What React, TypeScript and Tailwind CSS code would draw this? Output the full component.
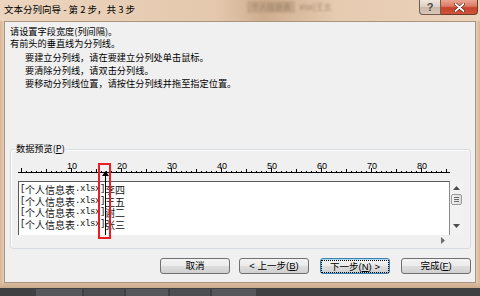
import React from "react"

const ui = { fontFamily: '"Liberation Sans", "Noto Sans CJK SC", sans-serif' }
const cjk = { fontFamily: '"Noto Sans CJK SC", "Liberation Sans", sans-serif' }
const mono = { fontFamily: '"Liberation Mono", monospace' }

const rows = ["李四", "王五", "谢二", "张三"]

function Ruler() {
  const ticks = []
  for (let n = 0; n <= 85; n++) {
    const x = 3 + n * 5
    const h = n % 10 === 0 ? 4 : n % 5 === 0 ? 3 : 1
    ticks.push(<line key={n} x1={x + 0.5} x2={x + 0.5} y1={15 - h} y2={16} stroke="#000" strokeWidth={1} />)
  }
  const nums = [10, 20, 30, 40, 50, 60, 70, 80]
  return (
    <svg width={434} height={22} className="block">
      <line x1={0} x2={432} y1={15.5} y2={15.5} stroke="#000" strokeWidth={1} />
      {ticks}
      {nums.map((n) => (
        <text key={n} x={3 + n * 5 + 1} y={12} fontSize={9} textAnchor="middle" fill="#000" style={ui}>
          {n}
        </text>
      ))}
    </svg>
  )
}

function Btn({ children, focused }: { children: React.ReactNode; focused?: boolean }) {
  return (
    <div
      className={
        "w-[70px] h-[16px] rounded-[3px] border flex items-center justify-center text-[9.5px] text-black bg-[linear-gradient(#f3f3f3_0%,#ebebeb_48%,#dddddd_52%,#d0d0d0_100%)] " +
        (focused ? "border-[#3c7fb1] shadow-[inset_0_0_0_1px_#a9dcf5]" : "border-[#707070]")
      }
      style={ui}
    >
      {focused ? (
        <span className="border border-dotted border-black px-[8px] leading-[11px]">{children}</span>
      ) : (
        children
      )}
    </div>
  )
}

export default function App() {
  return (
    <div className="w-[480px] h-[296px] overflow-hidden flex flex-col bg-[#dcbd9f]" style={ui}>
      {/* title bar */}
      <div className="h-[21px] flex items-start bg-[linear-gradient(90deg,#ecd5bf_0%,#e4c8ad_45%,#cfae8f_55%,#e6cbb1_70%,#ebd2ba_100%)]">
        <div className="pl-[4px] pt-[3px] text-[9.5px] leading-[12px] text-black whitespace-nowrap" style={cjk}>
          文本分列向导 - 第 2 步，共 3 步
        </div>
        <div className="flex-1 flex items-start pl-[112px] pt-[1px] text-[8px] text-[#6e5a48] opacity-60 blur-[1px] whitespace-nowrap" style={cjk}>
          <span className="bg-[#b99a7c] px-[4px]">个人信息表</span>
          <span className="pl-[4px]">xlsx]王五</span>
        </div>
        <div className="w-[22px] h-[15px] border border-t-0 border-[#6f5e50] rounded-bl-[4px] bg-[linear-gradient(#f0e6dd_0%,#ddcfc2_50%,#c9b8a8_51%,#d8c8b9_100%)] flex items-center justify-center text-[11px] font-bold text-[#4a4a4a] leading-none">
          ?
        </div>
        <div className="w-[37px] h-[15px] mr-[2px] border border-t-0 border-l-0 border-[#6f3a2c] rounded-br-[4px] bg-[linear-gradient(#eba593_0%,#dc7a62_45%,#c8422a_55%,#d0553b_100%)] flex items-center justify-center">
          <svg width={11} height={9} viewBox="0 0 11 9">
            <path d="M1.5 1 L9.5 8 M9.5 1 L1.5 8" stroke="#5a1a10" strokeWidth={3} strokeLinecap="round" />
            <path d="M1.5 1 L9.5 8 M9.5 1 L1.5 8" stroke="#fff" strokeWidth={1.8} strokeLinecap="round" />
          </svg>
        </div>
      </div>

      {/* middle */}
      <div className="flex">
        <div className="w-[4px] bg-[linear-gradient(90deg,#d8b797,#e6ccb4)]" />
        <div className="w-[472px] h-[262px] border border-[#a99480] bg-[#f0f0f0] flex flex-col text-black">
          <div className="pt-[3px] pl-[5px] text-[9.2px] leading-[12px]" style={cjk}>
            <div>请设置字段宽度(列间隔)。</div>
            <div>有前头的垂直线为分列线。</div>
          </div>
          <div className="mt-[2px] pl-[20px] text-[9.2px] leading-[13px]" style={cjk}>
            <div>要建立分列线，请在要建立分列处单击鼠标。</div>
            <div>要清除分列线，请双击分列线。</div>
            <div>要移动分列线位置，请按住分列线并拖至指定位置。</div>
          </div>

          {/* group box */}
          <div className="relative mt-[59px] ml-[5px] w-[461px] h-[100px] border border-[#d5dbe0] rounded-[3px] shadow-[inset_1px_1px_0_#fff]">
            <div className="absolute -top-[8px] left-[4px] bg-[#f0f0f0] px-[1px] text-[9.2px] leading-[12px]" style={cjk}>
              数据预览(<u className="underline-offset-1">P</u>)
            </div>
            <div className="mt-[7px] ml-[7px]">
              <Ruler />
            </div>
            <div className="mt-[2px] ml-[7px] flex">
              <div className="w-[432px] h-[54px] bg-white border-t border-l border-r border-t-[#5a5a5a] border-l-[#5a5a5a] border-r-[#8a8a8a] pl-[1px] pt-[2px]">
                {rows.map((r) => (
                  <div key={r} className="h-[11.5px] leading-[11.5px] flex items-center whitespace-nowrap text-[10px] text-[#111]">
                    <span className="text-[9px] tracking-[-0.4px]" style={mono}>[</span>
                    <span style={cjk}>个人信息表</span>
                    <span className="text-[9px] tracking-[-0.4px]" style={mono}>.xlsx]</span>
                    <span style={cjk}>{r}</span>
                  </div>
                ))}
              </div>
              <div className="w-[13px] h-[54px] bg-[#f2f2f2] flex flex-col items-center">
                <svg width={7} height={4} className="mt-[5px]">
                  <path d="M3.5 0 L7 4 L0 4 Z" fill="#4d4d4d" />
                </svg>
                <div className="mt-[4px] w-[11px] h-[11px] border border-[#9a9a9a] rounded-[2px] bg-[linear-gradient(90deg,#f4f4f4,#dcdcdc)] flex flex-col items-center justify-center gap-[1px]">
                  <div className="w-[5px] h-px bg-[#6a6a6a]" />
                  <div className="w-[5px] h-px bg-[#6a6a6a]" />
                  <div className="w-[5px] h-px bg-[#6a6a6a]" />
                </div>
                <div className="flex-1" />
                <svg width={7} height={4} className="mb-[7px]">
                  <path d="M0 0 L7 0 L3.5 4 Z" fill="#4d4d4d" />
                </svg>
              </div>
            </div>
            <div className="ml-[7px] w-[432px] h-[10px] flex items-center justify-end pr-[5px]">
              <svg width={4} height={7}>
                <path d="M0 0 L4 3.5 L0 7 Z" fill="#6d6d6d" />
              </svg>
            </div>

            {/* column break */}
            <div className="absolute left-[94px] top-[25px] w-px h-[60px] bg-black" />
            <svg width={7} height={5} className="absolute left-[91px] top-[21px]">
              <path d="M3.5 0 L7 5 L0 5 Z" fill="#000" />
            </svg>
            {/* highlight */}
            <div className="absolute left-[87px] top-[13px] w-[13px] h-[76px] border-2 border-[#ec1c24]" />
          </div>

          {/* buttons */}
          <div className="mt-[9px] flex justify-end pr-[4px]">
            <Btn>取消</Btn>
            <div className="w-[9px]" />
            <Btn>
              &lt; 上一步(<u>B</u>)
            </Btn>
            <div className="w-[11px]" />
            <Btn focused>
              下一步(<u>N</u>) &gt;
            </Btn>
            <div className="w-[11px]" />
            <Btn>
              完成(<u>F</u>)
            </Btn>
          </div>
        </div>
        <div className="w-[4px] bg-[linear-gradient(90deg,#e6ccb4,#d8b797)]" />
      </div>

      {/* bottom frame */}
      <div className="h-[5px] bg-[linear-gradient(#dcbc9d,#c9ab8f)]" />
      <div className="h-[8px] bg-[#3f4042] flex items-end gap-[2px] pl-[36px]">
        <div className="w-[46px] h-[7px] bg-[#55575a]" />
        <div className="w-[40px] h-[7px] bg-[#4c4e51]" />
        <div className="w-[42px] h-[7px] bg-[#55575a]" />
        <div className="w-[40px] h-[7px] bg-[#4c4e51]" />
        <div className="w-[44px] h-[7px] bg-[#55575a]" />
      </div>
    </div>
  )
}
